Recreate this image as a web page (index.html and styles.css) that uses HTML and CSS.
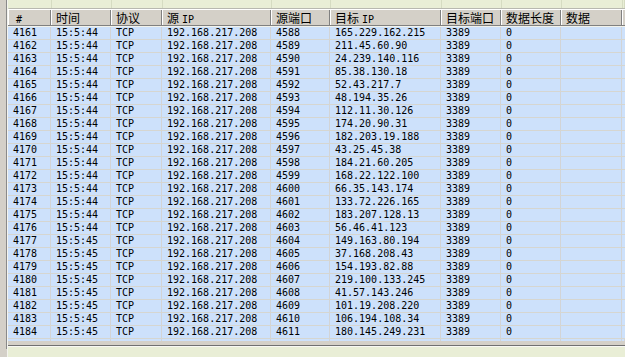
FILE: index.html
```html
<!DOCTYPE html>
<html>
<head>
<meta charset="utf-8">
<link rel="stylesheet" href="styles.css">
</head>
<body>
<div class="app">
  <div class="side"></div>
  <div class="main">
    <div class="toppane">
      <div class="cols"><i></i><i></i><i></i><i></i><i></i><i></i><i></i><i></i><i></i><i></i></div>
    </div>
    <div class="list">
      <div class="row head">
        <div class="h"><span class="l">#</span></div>
        <div class="h">时间</div>
        <div class="h">协议</div>
        <div class="h">源<span class="l">IP</span></div>
        <div class="h">源端口</div>
        <div class="h">目标<span class="l">IP</span></div>
        <div class="h">目标端口</div>
        <div class="h">数据长度</div>
        <div class="h">数据</div>
        <div class="h last"></div>
      </div>
      <div class="row d"><div>4161</div><div>15:5:44</div><div>TCP</div><div>192.168.217.208</div><div>4588</div><div>165.229.162.215</div><div>3389</div><div>0</div><div></div><div></div></div>
      <div class="row d"><div>4162</div><div>15:5:44</div><div>TCP</div><div>192.168.217.208</div><div>4589</div><div>211.45.60.90</div><div>3389</div><div>0</div><div></div><div></div></div>
      <div class="row d"><div>4163</div><div>15:5:44</div><div>TCP</div><div>192.168.217.208</div><div>4590</div><div>24.239.140.116</div><div>3389</div><div>0</div><div></div><div></div></div>
      <div class="row d"><div>4164</div><div>15:5:44</div><div>TCP</div><div>192.168.217.208</div><div>4591</div><div>85.38.130.18</div><div>3389</div><div>0</div><div></div><div></div></div>
      <div class="row d"><div>4165</div><div>15:5:44</div><div>TCP</div><div>192.168.217.208</div><div>4592</div><div>52.43.217.7</div><div>3389</div><div>0</div><div></div><div></div></div>
      <div class="row d"><div>4166</div><div>15:5:44</div><div>TCP</div><div>192.168.217.208</div><div>4593</div><div>48.194.35.26</div><div>3389</div><div>0</div><div></div><div></div></div>
      <div class="row d"><div>4167</div><div>15:5:44</div><div>TCP</div><div>192.168.217.208</div><div>4594</div><div>112.11.30.126</div><div>3389</div><div>0</div><div></div><div></div></div>
      <div class="row d"><div>4168</div><div>15:5:44</div><div>TCP</div><div>192.168.217.208</div><div>4595</div><div>174.20.90.31</div><div>3389</div><div>0</div><div></div><div></div></div>
      <div class="row d"><div>4169</div><div>15:5:44</div><div>TCP</div><div>192.168.217.208</div><div>4596</div><div>182.203.19.188</div><div>3389</div><div>0</div><div></div><div></div></div>
      <div class="row d"><div>4170</div><div>15:5:44</div><div>TCP</div><div>192.168.217.208</div><div>4597</div><div>43.25.45.38</div><div>3389</div><div>0</div><div></div><div></div></div>
      <div class="row d"><div>4171</div><div>15:5:44</div><div>TCP</div><div>192.168.217.208</div><div>4598</div><div>184.21.60.205</div><div>3389</div><div>0</div><div></div><div></div></div>
      <div class="row d"><div>4172</div><div>15:5:44</div><div>TCP</div><div>192.168.217.208</div><div>4599</div><div>168.22.122.100</div><div>3389</div><div>0</div><div></div><div></div></div>
      <div class="row d"><div>4173</div><div>15:5:44</div><div>TCP</div><div>192.168.217.208</div><div>4600</div><div>66.35.143.174</div><div>3389</div><div>0</div><div></div><div></div></div>
      <div class="row d"><div>4174</div><div>15:5:44</div><div>TCP</div><div>192.168.217.208</div><div>4601</div><div>133.72.226.165</div><div>3389</div><div>0</div><div></div><div></div></div>
      <div class="row d"><div>4175</div><div>15:5:44</div><div>TCP</div><div>192.168.217.208</div><div>4602</div><div>183.207.128.13</div><div>3389</div><div>0</div><div></div><div></div></div>
      <div class="row d"><div>4176</div><div>15:5:44</div><div>TCP</div><div>192.168.217.208</div><div>4603</div><div>56.46.41.123</div><div>3389</div><div>0</div><div></div><div></div></div>
      <div class="row d"><div>4177</div><div>15:5:45</div><div>TCP</div><div>192.168.217.208</div><div>4604</div><div>149.163.80.194</div><div>3389</div><div>0</div><div></div><div></div></div>
      <div class="row d"><div>4178</div><div>15:5:45</div><div>TCP</div><div>192.168.217.208</div><div>4605</div><div>37.168.208.43</div><div>3389</div><div>0</div><div></div><div></div></div>
      <div class="row d"><div>4179</div><div>15:5:45</div><div>TCP</div><div>192.168.217.208</div><div>4606</div><div>154.193.82.88</div><div>3389</div><div>0</div><div></div><div></div></div>
      <div class="row d"><div>4180</div><div>15:5:45</div><div>TCP</div><div>192.168.217.208</div><div>4607</div><div>219.100.133.245</div><div>3389</div><div>0</div><div></div><div></div></div>
      <div class="row d"><div>4181</div><div>15:5:45</div><div>TCP</div><div>192.168.217.208</div><div>4608</div><div>41.57.143.246</div><div>3389</div><div>0</div><div></div><div></div></div>
      <div class="row d"><div>4182</div><div>15:5:45</div><div>TCP</div><div>192.168.217.208</div><div>4609</div><div>101.19.208.220</div><div>3389</div><div>0</div><div></div><div></div></div>
      <div class="row d"><div>4183</div><div>15:5:45</div><div>TCP</div><div>192.168.217.208</div><div>4610</div><div>106.194.108.34</div><div>3389</div><div>0</div><div></div><div></div></div>
      <div class="row d"><div>4184</div><div>15:5:45</div><div>TCP</div><div>192.168.217.208</div><div>4611</div><div>180.145.249.231</div><div>3389</div><div>0</div><div></div><div></div></div>
      <div class="row tail"><div></div><div></div><div></div><div></div><div></div><div></div><div></div><div></div><div></div><div></div></div>
    </div>
    <div class="botpane"></div>
  </div>
</div>
</body>
</html>
```
FILE: styles.css
```css
html, body {
  margin: 0;
  padding: 0;
}
body {
  width: 625px;
  height: 357px;
  overflow: hidden;
  background: #d4d0c8;
  text-autospace: no-autospace;
}
.app {
  display: flex;
  height: 357px;
}
.side {
  width: 6px;
  flex: none;
  background: #d4d0c8;
  border-right: 1px solid #8a8a8a;
  height: 349px;
}
.main {
  flex: 1;
  display: flex;
  flex-direction: column;
  border-left: 1px solid #f4f4ee;
  min-width: 0;
}
.toppane {
  height: 8px;
  background: #e9eed6;
  border-bottom: 1px solid #b8b8b0;
  border-left: 1px solid #e9eed6;
}
.cols {
  display: grid;
  grid-template-columns: 43px 60px 51px 109px 59px 111px 60px 60px 61px 1fr;
  height: 8px;
}
.cols i {
  border-right: 1px solid #d6dcc2;
}
.list {
  border-top: 1px solid #ffffff;
  background: #f2f2ea;
}
.row {
  display: grid;
  grid-template-columns: 43px 60px 51px 109px 59px 111px 60px 60px 61px 1fr;
}
.head {
  height: 15px;
  background: #d4d0c8;
  border-bottom: 1px solid #808080;
  margin-bottom: 1px;
}
.h {
  border-left: 1px solid #ffffff;
  border-right: 1px solid #808080;
  padding-left: 4px;
  font-family: "Noto Sans CJK SC", sans-serif;
  font-size: 12px;
  line-height: 15px;
  color: #000;
  white-space: nowrap;
  overflow: hidden;
}
.h.last {
  border-right: none;
}
.l {
  font-family: "DejaVu Sans Mono", monospace;
  font-size: 10px;
}
.h .l:first-child {
  padding-left: 3px;
}
.d {
  height: 12px;
  background: #cde1fb;
  border-bottom: 1px solid #d6d6d0;
}
.d div {
  border-right: 1px solid #d2d4d6;
  padding-left: 5px;
  font-family: "DejaVu Sans Mono", monospace;
  font-size: 10px;
  line-height: 12px;
  color: #000;
  white-space: nowrap;
  overflow: hidden;
}
.tail {
  height: 2px;
  background: #cde1fb;
}
.tail div {
  border-right: 1px solid #d2d4d6;
}
.botpane {
  margin-top: 4px;
  flex: 1;
  background: #e9eed6;
  border-top: 1px solid #707070;
  box-shadow: inset 0 1px 0 #f8f8f4;
}
```
